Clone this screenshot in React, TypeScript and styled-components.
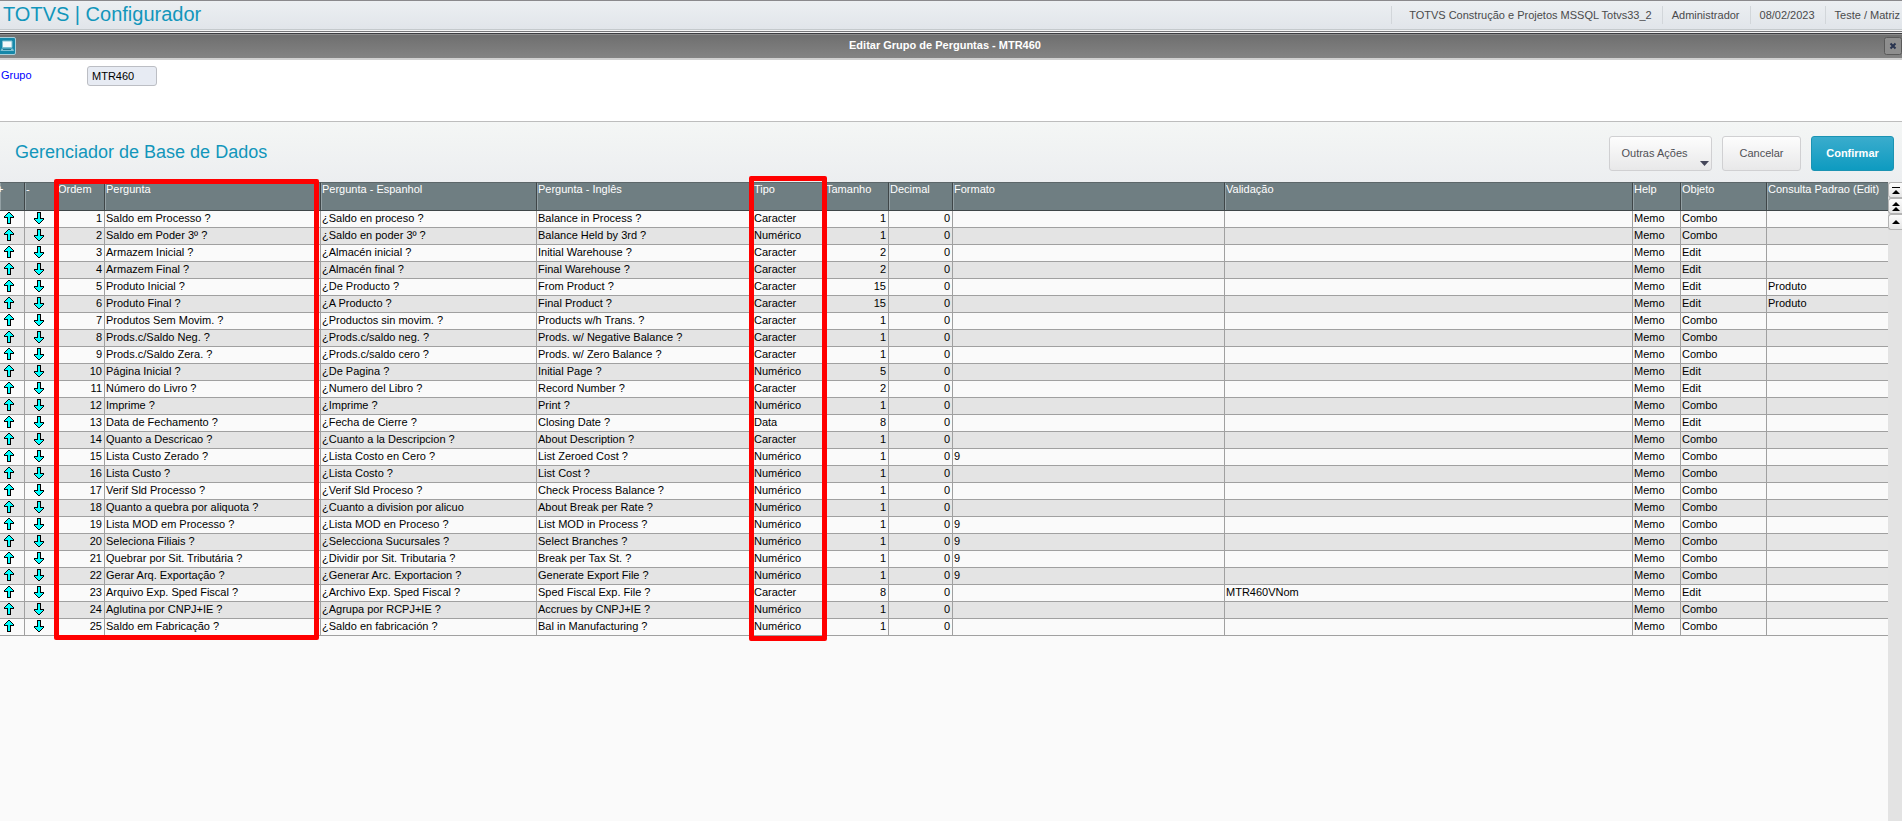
import React from 'react';
import styled, { createGlobalStyle } from 'styled-components';

const GlobalStyle = createGlobalStyle`
  * { box-sizing: border-box; }
  body { margin: 0; background: #fafafa; font-family: "Liberation Sans", Arial, sans-serif; font-size: 11px; line-height: 16px; color: #000; }
`;

const Page = styled.div`
  min-height: 100vh;
  display: flex;
  flex-direction: column;
`;

const AppBar = styled.header`
  display: flex;
  align-items: center;
  justify-content: space-between;
  height: 34px;
  padding-bottom: 6px;
  border-top: 1px solid #8a898c;
  border-bottom: 1px solid #3c3c40;
  background: linear-gradient(#eceff2, #e1e5ea 28px, #c4c9cc 28px, #c4c9cc 29px, #f4f4f4 29px, #f4f4f4 30px, #77777a 30px, #77777a 31px, #f0f0f0 31px);
`;

const AppTitle = styled.h1`
  margin: 0;
  padding: 0 3px;
  font-size: 20px;
  line-height: 26px;
  font-weight: 400;
  color: #1296bb;
`;

const Session = styled.ul`
  display: flex;
  margin: 0;
  padding: 2px 0 0;
  list-style: none;
  color: #4a4a4c;
`;

const SessionItem = styled.li<{ $wide?: boolean }>`
  padding: 0 10px 0 ${p => (p.$wide ? 17 : 9)}px;
  line-height: 18px;
  border-left: 1px solid #d2d6da;
  &:last-child { padding-right: 2px; }
`;

const TitleBar = styled.div`
  display: flex;
  align-items: center;
  justify-content: space-between;
  height: 26px;
  padding-bottom: 2px;
  border-top: 1px solid #8c8c8c;
  border-bottom: 2px solid #d0d0d0;
  background: linear-gradient(#6f6f6f, #838383);
`;

const WindowTitle = styled.h2`
  margin: 0 10px 0 0;
  padding-bottom: 2px;
  font-size: 11px;
  line-height: 16px;
  font-weight: 700;
  color: #fff;
`;

const IconButton = styled.button`
  display: block;
  padding: 0;
  border: 0;
  background: none;
  line-height: 0;
`;

const Form = styled.form`
  display: flex;
  align-items: flex-start;
  height: 62px;
  padding: 6px 1px;
  border-bottom: 1px solid #bdbdbd;
  background: #fff;
`;

const FieldLabel = styled.label`
  width: 86px;
  line-height: 18px;
  color: #0000ff;
`;

const TextField = styled.input`
  width: 70px;
  height: 20px;
  padding: 0 4px;
  border: 1px solid #bcbec4;
  border-radius: 3px;
  background: #e7ebf3;
  font: inherit;
  color: #000;
`;

const ActionBar = styled.div`
  display: flex;
  align-items: center;
  justify-content: space-between;
  height: 60px;
  padding: 2px 8px 0 15px;
  background: linear-gradient(#f4f6f5, #eceef0);
`;

const SectionTitle = styled.h2`
  margin: 0;
  padding-bottom: 2px;
  font-size: 18px;
  line-height: 24px;
  font-weight: 400;
  color: #1296bb;
`;

const Actions = styled.div`
  display: flex;
  gap: 10px;
`;

const Button = styled.button<{ $width: number; $primary?: boolean; $menu?: boolean }>`
  position: relative;
  width: ${p => p.$width}px;
  height: 35px;
  padding: 0 ${p => (p.$menu ? 12 : 0)}px 0 0;
  border: 1px solid ${p => (p.$primary ? '#1b93b3' : '#d0d0d2')};
  border-radius: 3px;
  background: ${p => (p.$primary ? 'linear-gradient(#3aaccd, #0e9bc0)' : 'linear-gradient(#fdfdfd, #e8e8e9)')};
  font: inherit;
  font-weight: ${p => (p.$primary ? 700 : 400)};
  color: ${p => (p.$primary ? '#fff' : '#505055')};
`;

const MenuCaret = styled.svg`
  position: absolute;
  right: 2px;
  bottom: 4px;
`;

const Browse = styled.main`
  flex: 1;
  display: flex;
`;

const TableArea = styled.div`
  position: relative;
  flex: 1;
  align-self: flex-start;
  min-width: 0;
`;

const Table = styled.table`
  width: 100%;
  table-layout: fixed;
  border-collapse: separate;
  border-spacing: 0;
`;

const Head = styled.th`
  height: 29px;
  padding: 0 0 0 1px;
  border-top: 1px solid #5c6669;
  border-right: 1px solid #3f4648;
  border-bottom: 1px solid #3f4648;
  background: #6f7e82;
  box-shadow: inset 1px 0 #93a0a4;
  font-weight: 400;
  line-height: 12px;
  text-align: left;
  vertical-align: top;
  white-space: nowrap;
  color: #fff;
  &:first-child { padding: 0; text-indent: -3px; }
  &:last-child { border-right: 0; }
`;

const Row = styled.tr`
  background: #fafafa;
  &:nth-child(even) { background: #e4e4e4; }
`;

const Cell = styled.td<{ $align?: string }>`
  height: 17px;
  padding: 0 2px 0 1px;
  border-right: 1px solid #a0a0a0;
  border-bottom: 1px solid #a0a0a0;
  line-height: 14px;
  vertical-align: top;
  text-align: ${p => p.$align || 'left'};
  white-space: nowrap;
  overflow: hidden;
  &:last-child { border-right: 0; }
`;

const Highlight = styled.div<{ $left: number; $width: number; $rise: number; $drop: number }>`
  position: absolute;
  left: ${p => p.$left}px;
  width: ${p => p.$width}px;
  top: -${p => p.$rise}px;
  bottom: -${p => p.$drop}px;
  border: 5px solid #ff0000;
  border-radius: 2px;
  pointer-events: none;
`;

const Scroller = styled.div`
  width: 14px;
  background: #e3e3e3;
`;

const ScrollButton = styled.button`
  display: flex;
  align-items: center;
  justify-content: center;
  width: 14px;
  height: 16px;
  padding: 0;
  border: 1px solid #b4b4b4;
  border-right: 0;
  border-radius: 3px 0 0 3px;
  background: linear-gradient(#fcfcfc, #e6e6e6);
`;

const ArrowSvg = styled.svg`
  display: block;
`;

const Arrow = ({ down }: { down?: boolean }) => (
  <ArrowSvg width="10" height="12" viewBox="0 0 10 12" shapeRendering="crispEdges">
    <g transform={down ? 'rotate(180 5 6)' : undefined}>
      <path d="M4 0h2v1h1v1h1v1h1v1h1v2h-3v6h-4v-6h-3v-2h1v-1h1v-1h1v-1h1z" fill="#000" />
      <path d="M4 1h2v1h1v1h1v1h1v1h-3v6h-2v-6h-3v-1h1v-1h1v-1h1z" fill="#00ffff" />
    </g>
  </ArrowSvg>
);

const ArrowButton = styled(IconButton)<{ $indent: number }>`
  margin: 1px 0 0 ${p => p.$indent}px;
`;

const COLUMNS: [string, number | undefined][] = [
  ['+', 25], ['-', 32], ['Ordem', 48], ['Pergunta', 216], ['Pergunta - Espanhol', 216], ['Pergunta - Inglês', 216],
  ['Tipo', 72], ['Tamanho', 64], ['Decimal', 64], ['Formato', 272], ['Validação', undefined], ['Help', 48], ['Objeto', 86],
  ['Consulta Padrao (Edit)', 121],
];

const C = 'Caracter';
const N = 'Numérico';
type Question = [string, string, string, string, number, string, string?, string?, string?];
const ROWS: Question[] = [
  ['Saldo em Processo ?', '¿Saldo en proceso ?', 'Balance in Process ?', C, 1, 'Combo'],
  ['Saldo em Poder 3º ?', '¿Saldo en poder 3º ?', 'Balance Held by 3rd ?', N, 1, 'Combo'],
  ['Armazem Inicial ?', '¿Almacén inicial ?', 'Initial Warehouse ?', C, 2, 'Edit'],
  ['Armazem Final ?', '¿Almacén final ?', 'Final Warehouse ?', C, 2, 'Edit'],
  ['Produto Inicial ?', '¿De Producto ?', 'From Product ?', C, 15, 'Edit', '', '', 'Produto'],
  ['Produto Final ?', '¿A Producto ?', 'Final Product ?', C, 15, 'Edit', '', '', 'Produto'],
  ['Produtos Sem Movim. ?', '¿Productos sin movim. ?', 'Products w/h Trans. ?', C, 1, 'Combo'],
  ['Prods.c/Saldo Neg. ?', '¿Prods.c/saldo neg. ?', 'Prods. w/ Negative Balance ?', C, 1, 'Combo'],
  ['Prods.c/Saldo Zera. ?', '¿Prods.c/saldo cero ?', 'Prods. w/ Zero Balance ?', C, 1, 'Combo'],
  ['Página Inicial ?', '¿De Pagina ?', 'Initial Page ?', N, 5, 'Edit'],
  ['Número do Livro ?', '¿Numero del Libro ?', 'Record Number ?', C, 2, 'Edit'],
  ['Imprime ?', '¿Imprime ?', 'Print ?', N, 1, 'Combo'],
  ['Data de Fechamento ?', '¿Fecha de Cierre ?', 'Closing Date ?', 'Data', 8, 'Edit'],
  ['Quanto a Descricao ?', '¿Cuanto a la Descripcion ?', 'About Description ?', C, 1, 'Combo'],
  ['Lista Custo Zerado ?', '¿Lista Costo en Cero ?', 'List Zeroed Cost ?', N, 1, 'Combo', '9'],
  ['Lista Custo ?', '¿Lista Costo ?', 'List Cost ?', N, 1, 'Combo'],
  ['Verif Sld Processo ?', '¿Verif Sld Proceso ?', 'Check Process Balance ?', N, 1, 'Combo'],
  ['Quanto a quebra por aliquota ?', '¿Cuanto a division por alicuo', 'About Break per Rate ?', N, 1, 'Combo'],
  ['Lista MOD em Processo ?', '¿Lista MOD en Proceso ?', 'List MOD in Process ?', N, 1, 'Combo', '9'],
  ['Seleciona Filiais ?', '¿Selecciona Sucursales ?', 'Select Branches ?', N, 1, 'Combo', '9'],
  ['Quebrar por Sit. Tributária ?', '¿Dividir por Sit. Tributaria ?', 'Break per Tax St. ?', N, 1, 'Combo', '9'],
  ['Gerar Arq. Exportação ?', '¿Generar Arc. Exportacion ?', 'Generate Export File ?', N, 1, 'Combo', '9'],
  ['Arquivo Exp. Sped Fiscal ?', '¿Archivo Exp. Sped Fiscal ?', 'Sped Fiscal Exp. File ?', C, 8, 'Edit', '', 'MTR460VNom'],
  ['Aglutina por CNPJ+IE ?', '¿Agrupa por RCPJ+IE ?', 'Accrues by CNPJ+IE ?', N, 1, 'Combo'],
  ['Saldo em Fabricação ?', '¿Saldo en fabricación ?', 'Bal in Manufacturing ?', N, 1, 'Combo'],
];

export default function App() {
  return (
    <Page>
      <GlobalStyle />
      <AppBar>
        <AppTitle>TOTVS | Configurador</AppTitle>
        <Session>
          <SessionItem $wide>TOTVS Construção e Projetos MSSQL Totvs33_2</SessionItem>
          <SessionItem>Administrador</SessionItem>
          <SessionItem>08/02/2023</SessionItem>
          <SessionItem>Teste / Matriz</SessionItem>
        </Session>
      </AppBar>
      <TitleBar>
        <IconButton aria-label="Janela">
          <svg width="16" height="18" viewBox="0 0 16 18">
            <rect x="-3" y="0.5" width="18.5" height="17" rx="1.5" fill="#1687a8" stroke="#a9cdd8" />
            <path d="M2.500 4h9.500v6.500h-9.500z" fill="#f6f9fa" stroke="#7fbfd0" strokeWidth="1" />
            <path d="M1.500 11.500h11.500l1 2.500h-13.500z" fill="#7fc0d2" />
            <path d="M3 12h8v1h-8z" fill="#1f7790" />
          </svg>
        </IconButton>
        <WindowTitle>Editar Grupo de Perguntas - MTR460</WindowTitle>
        <IconButton aria-label="Fechar">
          <svg width="18" height="18" viewBox="0 0 18 18">
            <rect x="0.5" y="0.5" width="17" height="17" rx="2" fill="#8e8e8e" stroke="#5a5a5a" />
            <path d="M6.500 6.500l5 5M11.500 6.500l-5 5" stroke="#28334f" strokeWidth="2" />
          </svg>
        </IconButton>
      </TitleBar>
      <Form>
        <FieldLabel htmlFor="grupo">Grupo</FieldLabel>
        <TextField id="grupo" defaultValue="MTR460" readOnly />
      </Form>
      <ActionBar>
        <SectionTitle>Gerenciador de Base de Dados</SectionTitle>
        <Actions>
          <Button $width={103} $menu>
            Outras Ações
            <MenuCaret width="9" height="5" viewBox="0 0 9 5"><path d="M0 0h9l-4.500 5z" fill="#45475a" /></MenuCaret>
          </Button>
          <Button $width={79}>Cancelar</Button>
          <Button $width={83} $primary>Confirmar</Button>
        </Actions>
      </ActionBar>
      <Browse>
        <TableArea>
          <Table>
            <colgroup>
              {COLUMNS.map(([name, width]) => <col key={name} width={width} />)}
            </colgroup>
            <thead>
              <tr>{COLUMNS.map(([name]) => <Head key={name}>{name}</Head>)}</tr>
            </thead>
            <tbody>
              {ROWS.map(([pt, es, en, type, size, object, format, validation, query], i) => (
                <Row key={pt}>
                  <Cell><ArrowButton $indent={3} aria-label="Subir"><Arrow /></ArrowButton></Cell>
                  <Cell><ArrowButton $indent={8} aria-label="Descer"><Arrow down /></ArrowButton></Cell>
                  <Cell $align="right">{i + 1}</Cell>
                  <Cell>{pt}</Cell>
                  <Cell>{es}</Cell>
                  <Cell>{en}</Cell>
                  <Cell>{type}</Cell>
                  <Cell $align="right">{size}</Cell>
                  <Cell $align="right">0</Cell>
                  <Cell>{format}</Cell>
                  <Cell>{validation}</Cell>
                  <Cell>Memo</Cell>
                  <Cell>{object}</Cell>
                  <Cell>{query}</Cell>
                </Row>
              ))}
            </tbody>
          </Table>
          <Highlight $left={54} $width={265} $rise={3} $drop={4} />
          <Highlight $left={749} $width={78} $rise={6} $drop={5} />
        </TableArea>
        <Scroller>
          <ScrollButton aria-label="Início"><svg width="8" height="7"><path d="M0 0h8v1h-8zM0 7l4-4 4 4z" /></svg></ScrollButton>
          <ScrollButton aria-label="Página acima"><svg width="8" height="9"><path d="M0 4l4-4 4 4zM0 9l4-4 4 4z" /></svg></ScrollButton>
          <ScrollButton aria-label="Linha acima"><svg width="8" height="4"><path d="M0 4l4-4 4 4z" /></svg></ScrollButton>
        </Scroller>
      </Browse>
    </Page>
  );
}
